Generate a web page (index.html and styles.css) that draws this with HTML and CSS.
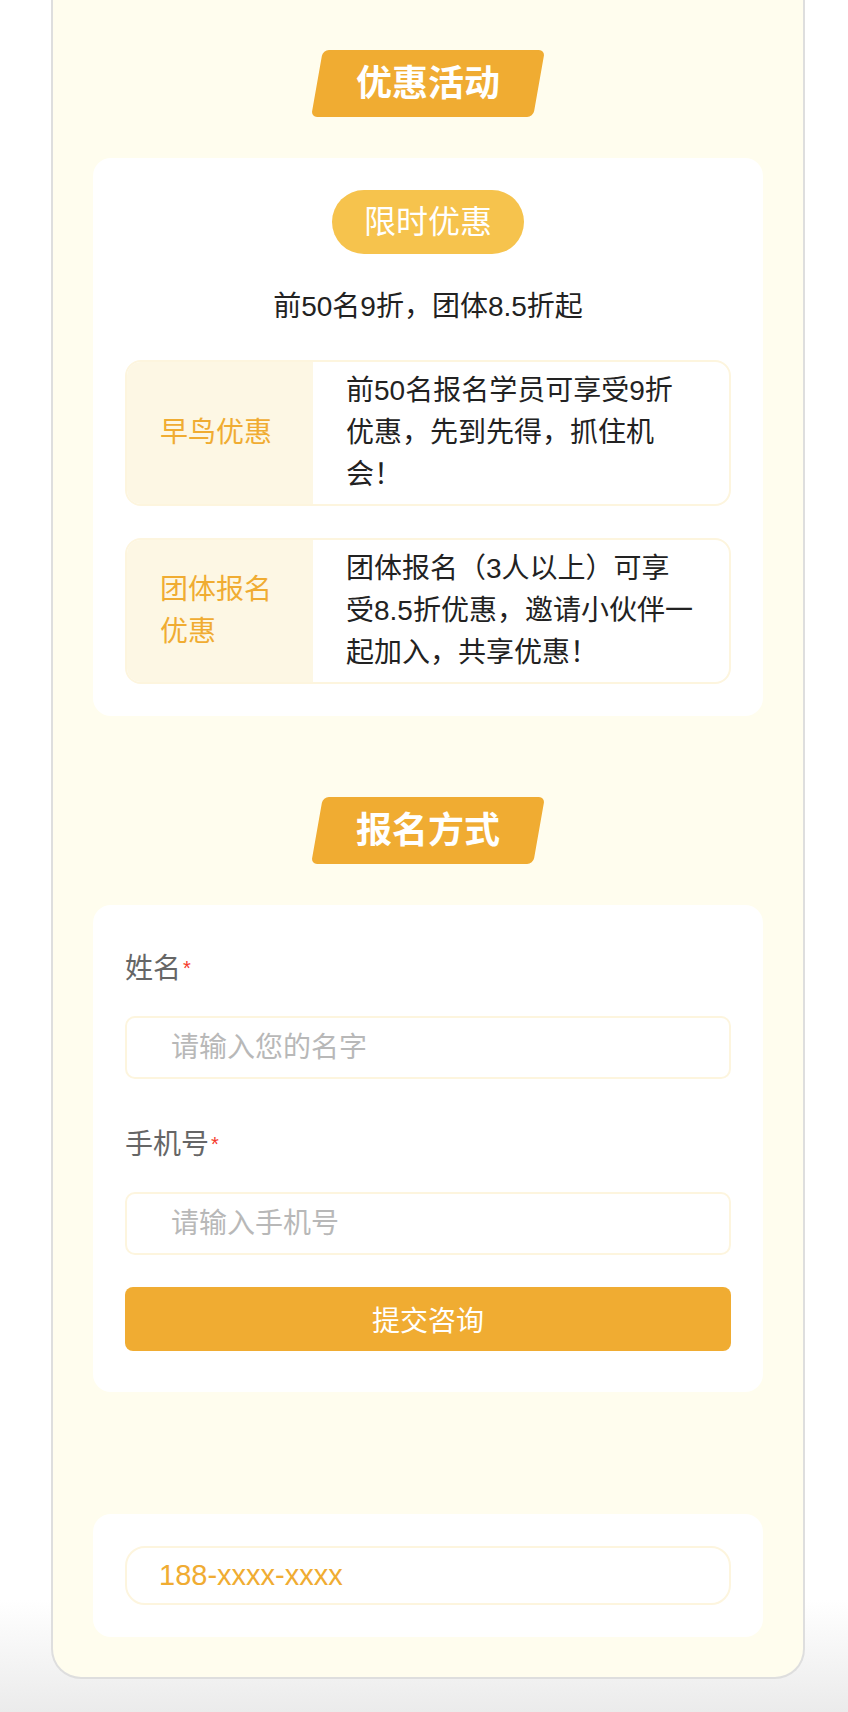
FILE: index.html
```html
<!DOCTYPE html>
<html lang="zh-CN">
<head>
<meta charset="utf-8">
<title>优惠活动</title>
<link rel="stylesheet" href="styles.css">
</head>
<body>
<div class="panel">
  <section class="section">
    <div class="title-wrap"><div class="title"><span class="title-text">优惠活动</span></div></div>
    <div class="card promo">
      <div class="pill">限时优惠</div>
      <p class="subtitle">前50名9折，团体8.5折起</p>
      <div class="offer">
        <div class="offer-label">早鸟优惠</div>
        <div class="offer-desc">前50名报名学员可享受9折优惠，先到先得，抓住机会！</div>
      </div>
      <div class="offer">
        <div class="offer-label">团体报名优惠</div>
        <div class="offer-desc">团体报名（3人以上）可享受8.5折优惠，邀请小伙伴一起加入，共享优惠！</div>
      </div>
    </div>
  </section>

  <section class="section section-form">
    <div class="title-wrap"><div class="title"><span class="title-text">报名方式</span></div></div>
    <form class="card form">
      <div class="field">
        <label class="field-label" for="name">姓名<span class="req">*</span></label>
        <input class="field-input" id="name" type="text" placeholder="请输入您的名字">
      </div>
      <div class="field">
        <label class="field-label" for="phone">手机号<span class="req">*</span></label>
        <input class="field-input" id="phone" type="tel" placeholder="请输入手机号">
      </div>
      <button class="submit" type="button">提交咨询</button>
    </form>
  </section>

  <section class="section section-contact">
    <div class="card contact">
      <div class="contact-box">188-xxxx-xxxx</div>
    </div>
  </section>
</div>
</body>
</html>
```

FILE: styles.css
```css
* {
  box-sizing: border-box;
}

html {
  min-height: 100%;
  background: linear-gradient(to bottom, #ffffff 0, #ffffff 1600px, #ebebeb 1712px);
}

body {
  margin: 0;
  font-family: "Liberation Sans", "Noto Sans CJK SC", sans-serif;
  color: #222222;
}

.panel {
  margin-left: 51px;
  width: 754px;
  background: #fffdee;
  border: 2px solid #dedede;
  border-top: none;
  border-radius: 0 0 30px 30px;
  padding: 50px 40px 40px;
}

.section-form {
  margin-top: 81px;
}

.section-contact {
  margin-top: 122px;
}

.title-wrap {
  display: flex;
  justify-content: center;
  margin-bottom: 41px;
}

.title {
  width: 222px;
  height: 67px;
  background: #f0ac32;
  border-radius: 6px;
  transform: skewX(-10deg);
  display: flex;
  align-items: center;
  justify-content: center;
}

.title-text {
  transform: skewX(10deg);
  color: #ffffff;
  font-size: 36px;
  font-weight: 700;
  line-height: 1;
}

.card {
  background: #ffffff;
  border-radius: 18px;
  padding: 32px;
}

.promo {
  display: flex;
  flex-direction: column;
  align-items: center;
}

.pill {
  height: 64px;
  padding: 0 32px;
  border-radius: 32px;
  background: #f6c34d;
  color: #ffffff;
  font-size: 32px;
  line-height: 64px;
}

.subtitle {
  margin: 32px 0;
  font-size: 28px;
  line-height: 42px;
  color: #222222;
}

.offer {
  align-self: stretch;
  display: flex;
  border: 2px solid #fdf5de;
  border-radius: 16px;
  overflow: hidden;
}

.offer + .offer {
  margin-top: 32px;
}

.offer-label {
  width: 186px;
  flex: none;
  display: flex;
  align-items: center;
  padding: 0 30px 0 33px;
  background: #fdf7e4;
  color: #f0ac32;
  font-size: 28px;
  line-height: 42px;
}

.offer-desc {
  flex: 1;
  padding: 8px 34px 8px 33px;
  font-size: 28px;
  line-height: 42px;
  color: #222222;
}

.form {
  padding-bottom: 41px;
}

.field + .field {
  margin-top: 34px;
}

.field-label {
  display: block;
  height: 63px;
  margin-bottom: 16px;
  font-size: 28px;
  line-height: 63px;
  color: #666666;
}

.req {
  color: #f5392b;
  font-size: 20px;
  vertical-align: 3px;
  margin-left: 2px;
}

.field-input {
  display: block;
  width: 100%;
  height: 63px;
  border: 2px solid #fdf5de;
  border-radius: 10px;
  padding: 0 20px 0 44px;
  font-family: inherit;
  font-size: 28px;
  color: #222222;
  background: #ffffff;
  outline: none;
}

.field-input::placeholder {
  color: #b8b8b8;
}

.submit {
  display: block;
  width: 100%;
  height: 64px;
  margin-top: 32px;
  border: none;
  border-radius: 8px;
  background: #f0ac32;
  color: #ffffff;
  font-family: inherit;
  font-size: 28px;
}

.contact-box {
  height: 59px;
  border: 2px solid #fdf5de;
  border-radius: 20px;
  padding: 0 32px;
  display: flex;
  align-items: center;
  color: #f0ac32;
  font-size: 29px;
}
```
